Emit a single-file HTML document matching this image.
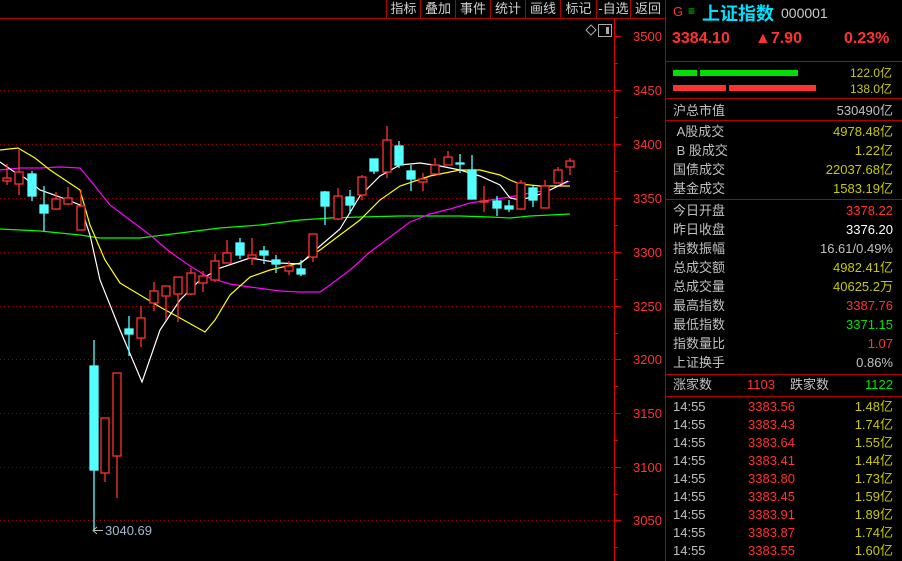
<!DOCTYPE html>
<html><head><meta charset="utf-8"><style>
*{margin:0;padding:0;box-sizing:border-box}
body{width:902px;height:561px;background:#000;overflow:hidden;position:relative;font-family:"Liberation Sans","Noto Sans CJK SC",sans-serif;font-size:13px;color:#c0c0c0}
.a{position:absolute;white-space:nowrap}
.btn{position:absolute;top:0;height:19px;border-left:1px solid #b00000;border-bottom:1px solid #b00000;line-height:18px;text-align:center;color:#d0d0d0;font-size:13px}
.p{position:absolute;left:665px;width:237px;border-left:1px solid #b00000}
.row{position:absolute;left:673px;width:220px;height:19px;line-height:19px}
.row .l{position:absolute;left:0}
.row .r{position:absolute;right:0}
.hl{position:absolute;left:665px;width:237px;height:1px;background:#b00000}
.y{color:#c8c800}.rd{color:#ff3232}.g{color:#00e000}.w{color:#fff}
</style></head><body>
<div class="btn" style="left:386px;width:34px">指标</div>
<div class="btn" style="left:420px;width:35px">叠加</div>
<div class="btn" style="left:455px;width:35px">事件</div>
<div class="btn" style="left:490px;width:35px">统计</div>
<div class="btn" style="left:525px;width:35px">画线</div>
<div class="btn" style="left:560px;width:36px">标记</div>
<div class="btn" style="left:596px;width:34px">-自选</div>
<div class="btn" style="left:630px;width:35px">返回</div>
<div style="position:absolute;left:0;top:18px;width:666px;height:1px;background:#b00000"></div>
<svg class="a" style="left:0;top:0" width="666" height="561">
<g stroke="#a00000" stroke-dasharray="1 3" stroke-width="1">
<line x1="0" y1="90.5" x2="614" y2="90.5"/><line x1="0" y1="144.5" x2="614" y2="144.5"/><line x1="0" y1="198.5" x2="614" y2="198.5"/><line x1="0" y1="252.5" x2="614" y2="252.5"/><line x1="0" y1="306.5" x2="614" y2="306.5"/><line x1="0" y1="359.5" x2="614" y2="359.5"/><line x1="0" y1="413.5" x2="614" y2="413.5"/><line x1="0" y1="467.5" x2="614" y2="467.5"/><line x1="0" y1="520.5" x2="614" y2="520.5"/>
</g>
<line x1="614.5" y1="19" x2="614.5" y2="561" stroke="#e00000"/>
<g stroke="#e00000">
<line x1="614" y1="36.5" x2="621" y2="36.5"/><line x1="614" y1="63.5" x2="618" y2="63.5"/>
<line x1="614" y1="90.5" x2="621" y2="90.5"/><line x1="614" y1="117.5" x2="618" y2="117.5"/>
<line x1="614" y1="144.5" x2="621" y2="144.5"/><line x1="614" y1="171.5" x2="618" y2="171.5"/>
<line x1="614" y1="198.5" x2="621" y2="198.5"/><line x1="614" y1="225.5" x2="618" y2="225.5"/>
<line x1="614" y1="252.5" x2="621" y2="252.5"/><line x1="614" y1="279.5" x2="618" y2="279.5"/>
<line x1="614" y1="306.5" x2="621" y2="306.5"/><line x1="614" y1="333.5" x2="618" y2="333.5"/>
<line x1="614" y1="359.5" x2="621" y2="359.5"/><line x1="614" y1="386.5" x2="618" y2="386.5"/>
<line x1="614" y1="413.5" x2="621" y2="413.5"/><line x1="614" y1="440.5" x2="618" y2="440.5"/>
<line x1="614" y1="467.5" x2="621" y2="467.5"/><line x1="614" y1="494.5" x2="618" y2="494.5"/>
<line x1="614" y1="520.5" x2="621" y2="520.5"/><line x1="614" y1="547.5" x2="618" y2="547.5"/>
</g>
<g fill="#ff3232" font-size="13" font-family="Liberation Sans">
<text x="633" y="41">3500</text><text x="633" y="95">3450</text><text x="633" y="149">3400</text><text x="633" y="203">3350</text><text x="633" y="257">3300</text><text x="633" y="311">3250</text><text x="633" y="364">3200</text><text x="633" y="418">3150</text><text x="633" y="472">3100</text><text x="633" y="525">3050</text>
</g>
<path d="M586 30 L591 25 L596 30 L591 35 Z" fill="none" stroke="#aaa"/>
<rect x="598.5" y="24.5" width="13" height="12" fill="none" stroke="#aaa"/><rect x="606" y="27" width="3" height="7" fill="#aaa"/>
<polyline fill="none" stroke="#00ff00" stroke-width="1.2" points="0,229 40,231 60,233 80,235 100,238 140,238 180,233 220,228 260,225 300,220 330,218 360,217 400,216 460,216 490,217 510,218 530,216 550,215 570,214"/>
<polyline fill="none" stroke="#ff00ff" stroke-width="1.2" points="0,170 20,168 40,168 60,167 80,168 90,180 110,205 130,220 150,235 170,252 190,266 210,278 230,284 250,287 280,291 300,292 320,292 330,285 350,270 370,252 390,237 410,222 430,214 450,209 470,203 490,200 510,197 530,193 550,190 570,181"/>
<polyline fill="none" stroke="#ffff00" stroke-width="1.2" points="0,150 18,148 35,158 50,170 80,190 90,225 105,260 120,283 140,295 160,307 180,318 205,332 215,320 230,295 250,277 270,270 300,263 320,250 340,235 360,220 380,200 400,186 430,176 460,170 480,170 500,175 510,180 520,184 540,186 560,186 570,186"/>
<polyline fill="none" stroke="#ffffff" stroke-width="1.2" points="0,162 13,171 25,178 40,190 60,197 80,205 90,235 100,280 120,330 142,382 160,330 180,300 200,280 220,268 250,258 280,263 300,264 320,246 340,229 360,196 380,176 400,165 420,163 440,166 460,170 480,176 500,185 510,198 520,200 535,196 550,190 568,181"/>
<g stroke="#ff3232" fill="#000" stroke-width="1.3">
<line x1="7" y1="164" x2="7" y2="185"/><rect x="3" y="178" width="8" height="3"/>
<line x1="19" y1="150" x2="19" y2="195"/><rect x="15" y="172" width="8" height="12"/>
<line x1="56" y1="192" x2="56" y2="210"/><rect x="52" y="199" width="8" height="10"/>
<line x1="68" y1="187" x2="68" y2="205"/><rect x="64" y="198" width="8" height="6"/>
<line x1="81" y1="190" x2="81" y2="230"/><rect x="77" y="206" width="8" height="24"/>
<line x1="105" y1="470" x2="105" y2="482"/><rect x="101" y="418" width="8" height="55"/>
<line x1="117" y1="450" x2="117" y2="498"/><rect x="113" y="373" width="8" height="83"/>
<line x1="141" y1="306" x2="141" y2="347"/><rect x="137" y="318" width="8" height="20"/>
<line x1="154" y1="282" x2="154" y2="311"/><rect x="150" y="291" width="8" height="12"/>
<line x1="166" y1="286" x2="166" y2="320"/><rect x="162" y="286" width="8" height="10"/>
<line x1="178" y1="277" x2="178" y2="322"/><rect x="174" y="277" width="8" height="17"/>
<line x1="191" y1="268" x2="191" y2="295"/><rect x="187" y="273" width="8" height="21"/>
<line x1="203" y1="271" x2="203" y2="292"/><rect x="199" y="276" width="8" height="7"/>
<line x1="215" y1="254" x2="215" y2="282"/><rect x="211" y="261" width="8" height="19"/>
<line x1="227" y1="240" x2="227" y2="263"/><rect x="223" y="253" width="8" height="10"/>
<line x1="252" y1="238" x2="252" y2="265"/><rect x="248" y="255" width="8" height="3"/>
<line x1="289" y1="261" x2="289" y2="275"/><rect x="285" y="266" width="8" height="5"/>
<line x1="313" y1="234" x2="313" y2="262"/><rect x="309" y="234" width="8" height="23"/>
<line x1="338" y1="188" x2="338" y2="220"/><rect x="334" y="196" width="8" height="23"/>
<line x1="362" y1="175" x2="362" y2="200"/><rect x="358" y="177" width="8" height="18"/>
<line x1="387" y1="126" x2="387" y2="178"/><rect x="383" y="140" width="8" height="32"/>
<line x1="423" y1="173" x2="423" y2="191"/><rect x="419" y="179" width="8" height="3"/>
<line x1="435" y1="158" x2="435" y2="174"/><rect x="431" y="165" width="8" height="9"/>
<line x1="448" y1="151" x2="448" y2="165"/><rect x="444" y="157" width="8" height="8"/>
<line x1="484" y1="186" x2="484" y2="212"/><rect x="480" y="201" width="8" height="1"/>
<line x1="521" y1="180" x2="521" y2="210"/><rect x="517" y="183" width="8" height="26"/>
<line x1="545" y1="180" x2="545" y2="208"/><rect x="541" y="186" width="8" height="22"/>
<line x1="558" y1="167" x2="558" y2="183"/><rect x="554" y="170" width="8" height="13"/>
<line x1="570" y1="158" x2="570" y2="175"/><rect x="566" y="161" width="8" height="6"/>
</g>
<g stroke="#54ffff" fill="#54ffff" stroke-width="1.3">
<line x1="32" y1="171" x2="32" y2="201"/><rect x="28" y="174" width="8" height="22"/>
<line x1="44" y1="186" x2="44" y2="231"/><rect x="40" y="205" width="8" height="8"/>
<line x1="94" y1="340" x2="94" y2="530"/><rect x="90" y="366" width="8" height="104"/>
<line x1="129" y1="316" x2="129" y2="356"/><rect x="125" y="329" width="8" height="5"/>
<line x1="240" y1="238" x2="240" y2="259"/><rect x="236" y="243" width="8" height="12"/>
<line x1="264" y1="246" x2="264" y2="264"/><rect x="260" y="251" width="8" height="4"/>
<line x1="276" y1="255" x2="276" y2="273"/><rect x="272" y="260" width="8" height="4"/>
<line x1="301" y1="260" x2="301" y2="276"/><rect x="297" y="269" width="8" height="5"/>
<line x1="325" y1="191" x2="325" y2="225"/><rect x="321" y="192" width="8" height="14"/>
<line x1="350" y1="190" x2="350" y2="214"/><rect x="346" y="197" width="8" height="8"/>
<line x1="374" y1="159" x2="374" y2="174"/><rect x="370" y="159" width="8" height="12"/>
<line x1="399" y1="141" x2="399" y2="168"/><rect x="395" y="146" width="8" height="19"/>
<line x1="411" y1="165" x2="411" y2="191"/><rect x="407" y="171" width="8" height="8"/>
<line x1="460" y1="154" x2="460" y2="173"/><rect x="456" y="163" width="8" height="1"/>
<line x1="472" y1="155" x2="472" y2="199"/><rect x="468" y="170" width="8" height="29"/>
<line x1="497" y1="196" x2="497" y2="216"/><rect x="493" y="201" width="8" height="7"/>
<line x1="509" y1="200" x2="509" y2="212"/><rect x="505" y="206" width="8" height="3"/>
<line x1="533" y1="186" x2="533" y2="207"/><rect x="529" y="188" width="8" height="12"/>
</g>
<line x1="93" y1="530.5" x2="103" y2="530.5" stroke="#bbb"/><path d="M97 527 L93 530.5 L97 534" fill="none" stroke="#bbb"/>
<text x="105" y="535" fill="#a8b8c8" font-size="13" font-family="Liberation Sans">3040.69</text>
</svg>
<div class="p" style="top:0;height:561px"></div>
<div class="a" style="left:673px;top:4px;color:#ff3232;font-size:13px">G</div>
<div class="a" style="left:688px;top:4px;color:#00e000;font-size:12px">≡</div>
<div class="a" style="left:702px;top:0px;color:#00e0ff;font-size:18px;font-weight:bold">上证指数</div>
<div class="a" style="left:781px;top:5px;color:#ccc;font-size:14px">000001</div>
<div class="a" style="left:672px;top:30px;color:#ff3232;font-size:16px;font-weight:bold">3384.10</div>
<div class="a" style="left:755px;top:30px;color:#ff3232;font-size:16px;font-weight:bold">▲7.90</div>
<div class="a" style="left:844px;top:30px;color:#ff3232;font-size:16px;font-weight:bold">0.23%</div>
<div class="hl" style="top:61px"></div>
<div class="a" style="left:673px;top:70px;width:24px;height:6px;background:#00e000"></div>
<div class="a" style="left:700px;top:70px;width:98px;height:6px;background:#00e000"></div>
<div class="a" style="left:673px;top:85px;width:53px;height:6px;background:#ff3232"></div>
<div class="a" style="left:729px;top:85px;width:87px;height:6px;background:#ff3232"></div>
<div class="a y" style="right:10px;top:64px;font-size:12px">122.0亿</div>
<div class="a y" style="right:10px;top:80px;font-size:12px">138.0亿</div>
<div class="hl" style="top:98px"></div>
<div class="row" style="top:101px"><span class="l">沪总市值</span><span class="r">530490亿</span></div>
<div class="hl" style="top:120px"></div>
<div class="row" style="top:122px"><span class="l">&nbsp;A股成交</span><span class="r y">4978.48亿</span></div>
<div class="row" style="top:141px"><span class="l">&nbsp;B 股成交</span><span class="r y">1.22亿</span></div>
<div class="row" style="top:160px"><span class="l">国债成交</span><span class="r y">22037.68亿</span></div>
<div class="row" style="top:179px"><span class="l">基金成交</span><span class="r y">1583.19亿</span></div>
<div class="hl" style="top:199px"></div>
<div class="row" style="top:201px"><span class="l">今日开盘</span><span class="r rd">3378.22</span></div>
<div class="row" style="top:220px"><span class="l">昨日收盘</span><span class="r w">3376.20</span></div>
<div class="row" style="top:239px"><span class="l">指数振幅</span><span class="r">16.61/0.49%</span></div>
<div class="row" style="top:258px"><span class="l">总成交额</span><span class="r y">4982.41亿</span></div>
<div class="row" style="top:277px"><span class="l">总成交量</span><span class="r y">40625.2万</span></div>
<div class="row" style="top:296px"><span class="l">最高指数</span><span class="r rd">3387.76</span></div>
<div class="row" style="top:315px"><span class="l">最低指数</span><span class="r g">3371.15</span></div>
<div class="row" style="top:334px"><span class="l">指数量比</span><span class="r rd">1.07</span></div>
<div class="row" style="top:353px"><span class="l">上证换手</span><span class="r">0.86%</span></div>
<div class="hl" style="top:374px"></div>
<div class="row" style="top:375px"><span class="l">涨家数</span><span class="l rd" style="left:74px">1103</span><span class="l" style="left:117px">跌家数</span><span class="r g">1122</span></div>
<div class="hl" style="top:396px"></div>
<div class="row" style="top:397px"><span class="l">14:55</span><span class="l rd" style="left:75px">3383.56</span><span class="r y">1.48亿</span></div>
<div class="row" style="top:415px"><span class="l">14:55</span><span class="l rd" style="left:75px">3383.43</span><span class="r y">1.74亿</span></div>
<div class="row" style="top:433px"><span class="l">14:55</span><span class="l rd" style="left:75px">3383.64</span><span class="r y">1.55亿</span></div>
<div class="row" style="top:451px"><span class="l">14:55</span><span class="l rd" style="left:75px">3383.41</span><span class="r y">1.44亿</span></div>
<div class="row" style="top:469px"><span class="l">14:55</span><span class="l rd" style="left:75px">3383.80</span><span class="r y">1.73亿</span></div>
<div class="row" style="top:487px"><span class="l">14:55</span><span class="l rd" style="left:75px">3383.45</span><span class="r y">1.59亿</span></div>
<div class="row" style="top:505px"><span class="l">14:55</span><span class="l rd" style="left:75px">3383.91</span><span class="r y">1.89亿</span></div>
<div class="row" style="top:523px"><span class="l">14:55</span><span class="l rd" style="left:75px">3383.87</span><span class="r y">1.74亿</span></div>
<div class="row" style="top:541px"><span class="l">14:55</span><span class="l rd" style="left:75px">3383.55</span><span class="r y">1.60亿</span></div>
</body></html>
